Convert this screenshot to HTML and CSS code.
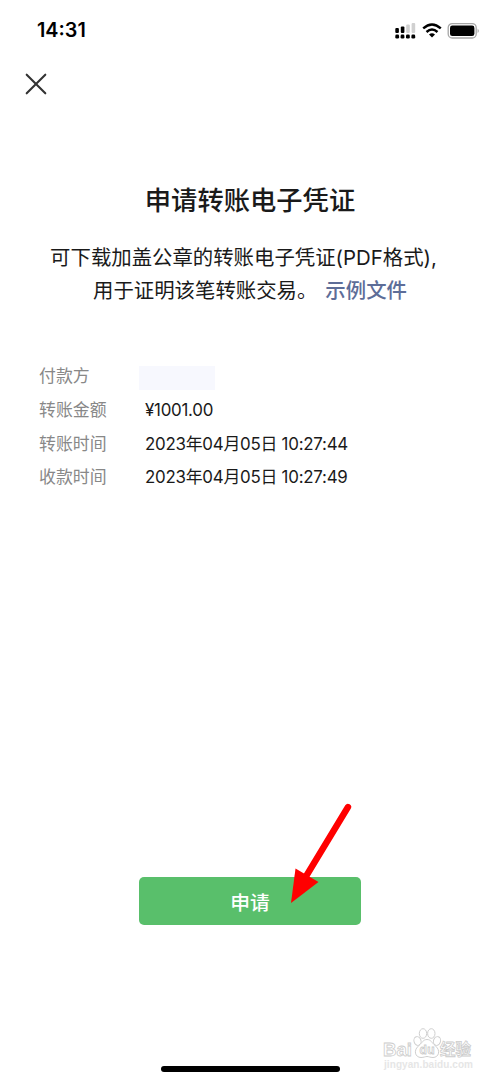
FILE: index.html
```
<!DOCTYPE html>
<html lang="zh-CN">

<head>
    <meta charset="UTF-8">
    <meta name="viewport" content="width=device-width, initial-scale=1.0">
    <title>申请转账电子凭证</title>
    <link rel="stylesheet" href="styles.css">
</head>

<body>
    <div class="status-bar">
        <span class="time">14:31</span>
        <svg class="status-icons" width="86" height="18" viewBox="0 0 86 18">
            <g fill="#000">
                <rect x="1.3" y="6" width="3.6" height="5" rx="1"/>
                <rect x="6.8" y="4.500" width="3.6" height="6.500" rx="1"/>
                <rect x="1.3" y="12.6" width="3.8" height="4" rx="1.3"/>
                <rect x="6.6" y="12.6" width="3.8" height="4" rx="1.3"/>
                <rect x="12" y="12.6" width="3.8" height="4" rx="1.3"/>
                <rect x="17.4" y="12.6" width="3.8" height="4" rx="1.3"/>
            </g>
            <g fill="#d0d0d0">
                <rect x="12.2" y="2.6" width="3.6" height="8.5" rx="1"/>
                <rect x="17.6" y="1" width="3.6" height="10" rx="1"/>
            </g>
            <g fill="none" stroke="#000" stroke-width="2.4">
                <path d="M29.2 6.4Q38 -1.600 46.8 6.4"/>
                <path d="M32.5 10Q38 5 43.5 10"/>
            </g>
            <path d="M35 12.400Q38 10 41 12.400L38 15.400Z"/>
            <rect x="54.2" y="1.600" width="28" height="14.4" rx="4" fill="#fff" stroke="#a6a6a6" stroke-width="1.3"/>
            <rect x="56" y="3.600" width="24.4" height="10.4" rx="2.3"/>
            <path d="M83.600 6.400Q86 8.800 83.600 11.200Z" fill="#a6a6a6"/>
        </svg>
    </div>

    <div class="nav">
        <svg width="24" height="24" viewBox="0 0 24 24" stroke="#333" stroke-width="2.1" stroke-linecap="round">
            <path d="M2.7 2.7L21.3 21.3M21.3 2.7L2.7 21.3"/>
        </svg>
    </div>

    <div class="intro">
        <h1>申请转账电子凭证</h1>
        <p class="line-1">可下载加盖公章的转账电子凭证(PDF格式),</p>
        <p>用于证明该笔转账交易。<a class="link">示例文件</a></p>
    </div>

    <dl class="info">
        <dt>付款方</dt>
        <dd><span class="mask"></span></dd>
        <dt>转账金额</dt>
        <dd>¥1001.00</dd>
        <dt>转账时间</dt>
        <dd>2023年04月05日 10:27:44</dd>
        <dt>收款时间</dt>
        <dd>2023年04月05日 10:27:49</dd>
    </dl>

    <div class="action">
        <button class="apply">申请</button>
        <svg class="arrow" width="64" height="104" viewBox="0 0 64 104">
            <path d="M59 8L16 79" stroke="#f00" stroke-width="6.4" stroke-linecap="round"/>
            <path d="M2 104L6.5 69.5L29.5 83Z" fill="#f00"/>
        </svg>
    </div>

    <div class="watermark">
        <svg width="94" height="44" viewBox="0 0 94 44">
            <g fill="#fff" stroke="#cfcfcf" stroke-width="1">
                <ellipse cx="36.5" cy="14" rx="3.5" ry="4.4" transform="rotate(-18 36.5 14)"/>
                <ellipse cx="42" cy="6.5" rx="3.7" ry="4.8"/>
                <ellipse cx="50.3" cy="6.5" rx="3.7" ry="4.8"/>
                <ellipse cx="56" cy="14" rx="3.5" ry="4.4" transform="rotate(18 56 14)"/>
                <path d="M46 12.500C50 12.500 51 16 54 18.500C60 23 58 30.500 52 30.500C49 30.500 48 29.500 46 29.500C44 29.500 43 30.500 40 30.500C34 30.500 32 23 38 18.500C41 16 42 12.500 46 12.500Z"/>
            </g>
            <g class="wm-text">
                <text x="2" y="29" font-size="19" textLength="29" lengthAdjust="spacingAndGlyphs">Bai</text>
                <text x="38.5" y="27" font-size="12" textLength="15">du</text>
                <text x="59" y="28" font-size="15.5" textLength="31">经验</text>
                <text class="wm-url" x="3" y="41" font-size="10" textLength="89">jingyan.baidu.com</text>
            </g>
        </svg>
    </div>

    <div class="home-bar"></div>
</body>

</html>
```
FILE: styles.css
```
* {
    box-sizing: border-box;
}

body {
    display: flex;
    flex-direction: column;
    height: 1082px;
    margin: 0;
    position: relative;
    overflow: hidden;
    background-color: #fff;
    color: #1a1a1a;
    font-family: Inter, "Noto Sans CJK SC", sans-serif;
}

.status-bar {
    display: flex;
    justify-content: space-between;
    align-items: center;
    height: 60px;
    padding: 0 20px 0 37px;
}

.time {
    color: #000;
    font-size: 19.8px;
    font-weight: 600;
}

.status-icons {
    margin-top: 1px;
}

.nav {
    height: 48px;
    padding: 12px 24px;
}

.nav svg {
    display: block;
}

.intro {
    padding-top: 73px;
    text-align: center;
    white-space: nowrap;
}

h1 {
    margin: 0 0 20px;
    font-size: 26.3px;
    font-weight: 500;
    line-height: 40px;
}

.intro p {
    margin: 0;
    font-size: 20.4px;
    line-height: 33px;
}

.intro .line-1 {
    margin-left: -13px;
}

.link {
    margin-left: 8px;
    color: #5d6d98;
    font-weight: 500;
}

.info {
    display: grid;
    grid-template-columns: 106px auto;
    grid-auto-rows: 33.8px;
    margin: 53px 0 0;
    padding-left: 39px;
    font-size: 16.9px;
    line-height: 33.8px;
    white-space: nowrap;
}

dt {
    color: #888;
}

dd {
    margin: 0;
    letter-spacing: -0.25px;
}

.mask {
    display: block;
    width: 76px;
    height: 24px;
    margin: 6px 0 0 -6px;
    background-color: #f7f8fe;
}

.action {
    position: relative;
    width: 222px;
    margin: 382px auto 0;
}

.apply {
    display: block;
    width: 222px;
    height: 48px;
    padding: 0;
    border: none;
    border-radius: 5px;
    background-color: #59bf6b;
    color: #fff;
    font-family: "Noto Sans CJK SC", sans-serif;
    font-size: 19.8px;
    font-weight: 500;
}

.arrow {
    position: absolute;
    left: 150px;
    top: -78px;
}

.watermark {
    position: absolute;
    right: 25px;
    bottom: 11px;
}

.watermark svg {
    display: block;
}

.wm-text {
    fill: #fff;
    stroke: #ccc;
    stroke-width: 0.8px;
    font-family: "Liberation Sans", "Noto Sans CJK SC", sans-serif;
    font-weight: bold;
}

.wm-url {
    fill: #e6e6e6;
    stroke: none;
}

.home-bar {
    width: 179px;
    height: 6px;
    margin: auto auto 10px;
    border-radius: 3px;
    background-color: #000;
}
```
